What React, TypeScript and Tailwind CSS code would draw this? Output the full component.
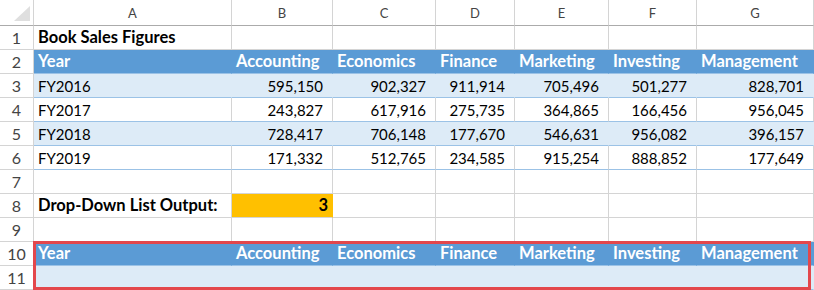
import React from 'react';

type Kind = 'plain' | 'head' | 'band' | 'white';

type Row = {
  n: number;
  kind: Kind;
  cells: string[];
};

const letters = ['A', 'B', 'C', 'D', 'E', 'F', 'G'];
const headers = ['Year', 'Accounting', 'Economics', 'Finance', 'Marketing', 'Investing', 'Management'];
const empty = ['', '', '', '', '', '', ''];

const rows: Row[] = [
  { n: 1, kind: 'plain', cells: ['Book Sales Figures', '', '', '', '', '', ''] },
  { n: 2, kind: 'head', cells: headers },
  { n: 3, kind: 'band', cells: ['FY2016', '595,150', '902,327', '911,914', '705,496', '501,277', '828,701'] },
  { n: 4, kind: 'white', cells: ['FY2017', '243,827', '617,916', '275,735', '364,865', '166,456', '956,045'] },
  { n: 5, kind: 'band', cells: ['FY2018', '728,417', '706,148', '177,670', '546,631', '956,082', '396,157'] },
  { n: 6, kind: 'white', cells: ['FY2019', '171,332', '512,765', '234,585', '915,254', '888,852', '177,649'] },
  { n: 7, kind: 'plain', cells: empty },
  { n: 8, kind: 'plain', cells: ['Drop-Down List Output:', '3', '', '', '', '', ''] },
  { n: 9, kind: 'plain', cells: empty },
  { n: 10, kind: 'head', cells: headers },
  { n: 11, kind: 'band', cells: empty },
];

const kindClass: Record<Kind, string> = {
  plain: 'bg-white border-r-[#d4d4d4] border-b-[#d4d4d4] text-black',
  head: 'bg-[#5b9bd5] border-r-[#5b9bd5] border-b-[#9bc2e6] text-white font-bold text-[16.5px]',
  band: 'bg-[#ddebf7] border-r-[#ddebf7] border-b-[#9bc2e6] text-black',
  white: 'bg-white border-r-[#d4d4d4] border-b-[#9bc2e6] text-black',
};

const gridCols = 'grid grid-cols-[34px_198px_101px_103px_79px_94px_88px_117px]';

function Cell({ row, col, value }: { row: Row; col: number; value: string }) {
  // the drop-down output cell
  if (row.n === 8 && col === 1) {
    return (
      <div className="h-6 flex items-center justify-end pr-1 border-r border-b border-r-[#ffc000] border-b-[#d4d4d4] bg-[#ffc000] font-bold text-[16.5px]">
        {value}
      </div>
    );
  }

  const isText = col === 0 || row.kind === 'head';
  const bold = (row.n === 1 || row.n === 8) && col === 0;

  return (
    <div
      className={`h-6 flex items-center whitespace-nowrap border-r border-b ${kindClass[row.kind]} ${
        isText ? 'justify-start pl-1' : 'justify-end pr-[9px]'
      } ${bold ? 'font-bold text-[16.5px]' : ''}`}
    >
      {value}
    </div>
  );
}

export default function App() {
  return (
    <div className="relative w-[814px] h-[290px] overflow-hidden bg-white font-['Lato','Liberation_Sans',sans-serif] text-[15px] leading-[1.2]">
      {/* Column headers */}
      <div className={`${gridCols} h-[26px]`}>
        <div className="relative border-r border-b border-r-[#d4d4d4] border-b-[#ababab] bg-white">
          <svg className="absolute left-0 top-0" width="33" height="25" viewBox="0 0 33 25">
            <polygon points="14,21 30,21 30,6" fill="#dfdfdf" />
          </svg>
        </div>
        {letters.map((l) => (
          <div
            key={l}
            className="flex items-center justify-center pt-[3px] border-r border-b border-r-[#d4d4d4] border-b-[#ababab] bg-white text-[#444] text-[13px]"
          >
            {l}
          </div>
        ))}
      </div>

      {/* Rows */}
      {rows.map((row) => (
        <div key={row.n} className={gridCols}>
          <div className="h-6 flex items-center justify-center border-r border-b border-[#d4d4d4] bg-white text-[#444] text-[16px]">
            {row.n}
          </div>
          {row.cells.map((value, i) => (
            <Cell key={i} row={row} col={i} value={value} />
          ))}
        </div>
      ))}

      {/* Highlighted output table */}
      <div className="absolute left-[33px] top-[241px] w-[778px] h-[49px] border-[3px] border-[#e3474c] pointer-events-none" />
    </div>
  );
}
